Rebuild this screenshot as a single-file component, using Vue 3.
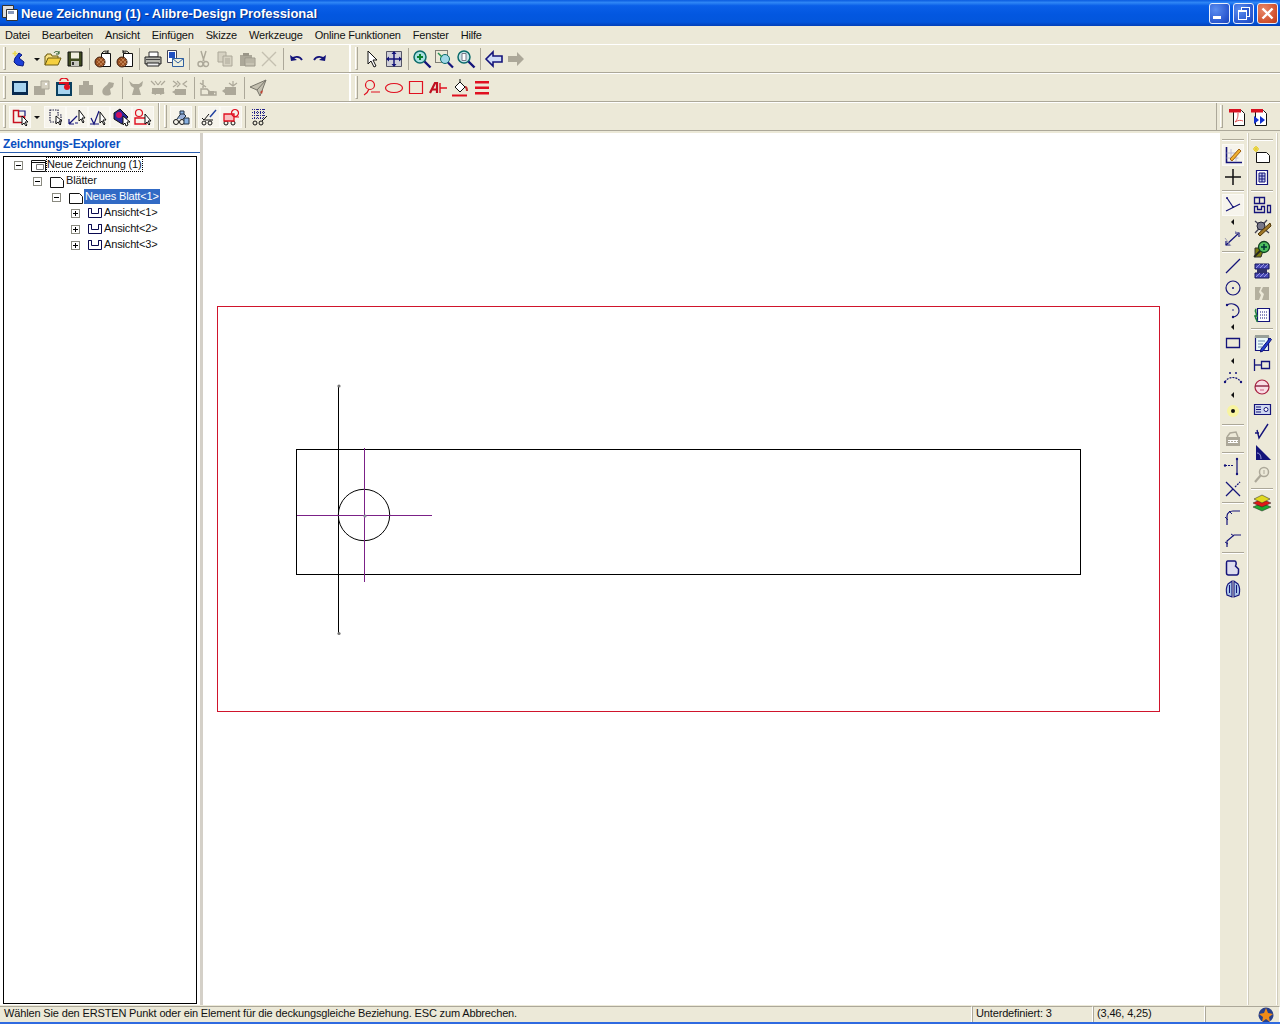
<template>
  <div class="app-window">
    <!-- Titelleiste -->
    <div class="titlebar">
      <Ico name="appdoc" />
      <span class="title-text">Neue Zeichnung (1) - Alibre-Design Professional</span>
      <div class="win-btns">
        <button class="win-btn"><i class="glyph-min"></i></button>
        <button class="win-btn"><i class="glyph-restore"></i></button>
        <button class="win-btn close"><svg width="13" height="13" viewBox="0 0 13 13"><path d="M1.5 1.5l10 10M11.5 1.5l-10 10" stroke="#fff" stroke-width="2.4" /></svg></button>
      </div>
    </div>

    <div class="menubar">
      <span v-for="m in menus" :key="m">{{ m }}</span>
    </div>

    <!-- Werkzeugleisten -->
    <div v-for="(row, r) in toolRows" :key="r" class="tool-row" :class="'row' + r">
      <div v-for="(group, g) in row" :key="g" class="tool-group" :class="group.cls">
        <i class="grip"></i>
        <template v-for="(t, i) in group.items" :key="i">
          <i v-if="t === '|'" class="sep"></i>
          <span v-else-if="t === 'drop'" class="drop"></span>
          <span v-else class="tool" :class="{ pressed: pressed.has(t) }"><Ico :name="t" /></span>
        </template>
      </div>
    </div>
    <div class="row-gap"></div>

    <div class="workspace">
      <!-- Explorer -->
      <aside class="explorer">
        <div class="explorer-head">Zeichnungs-Explorer</div>
        <div class="tree">
          <div v-for="n in tree" :key="n.label" class="tree-row" :style="{ paddingLeft: 10 + n.depth * 19 + 'px' }">
            <span class="expander" :class="{ closed: !n.open }"></span>
            <span class="tree-ico"><Ico :name="n.icon" :vb="16" /></span>
            <span class="tree-label" :class="{ selected: n.selected, focused: n.focused }">{{ n.label }}</span>
          </div>
        </div>
      </aside>
      <div class="splitter"></div>

      <main class="canvas">
        <svg width="1017" height="872" viewBox="203 133 1017 872">
          <rect x="217.5" y="306.5" width="942" height="405" fill="none" stroke="#d0142c" />
          <rect x="296.5" y="449.5" width="784" height="125" fill="none" stroke="#000" />
          <path d="M338.5 386V634" stroke="#000" />
          <circle cx="364" cy="515" r="25.7" fill="none" stroke="#000" />
          <path d="M364.5 448V582M297 515.5H432" stroke="#7b2187" />
          <circle cx="339" cy="386" r="1.6" fill="#777" />
          <circle cx="339" cy="633.5" r="1.6" fill="#777" />
          <circle cx="365" cy="516" r="1.6" fill="#8a8a9a" />
        </svg>
      </main>

      <div class="side-bars">
        <div v-for="(col, c) in sideCols" :key="c" class="side-col">
          <i class="side-grip"></i>
          <template v-for="(t, i) in col" :key="i">
            <i v-if="t === '|'" class="side-sep"></i>
            <span v-else-if="t === '<'" class="side-tri"></span>
            <span v-else-if="t === '<<'" class="side-tri tall"></span>
            <span v-else class="side-tool" :class="{ pressed: pressed.has(t) }"><Ico :name="t" /></span>
          </template>
        </div>
      </div>
    </div>

    <div class="statusbar">
      <div class="status-cell grow">Wählen Sie den ERSTEN Punkt oder ein Element für die deckungsgleiche Beziehung. ESC zum Abbrechen.</div>
      <div class="status-cell c1">Unterdefiniert: 3</div>
      <div class="status-cell c2">(3,46, 4,25)</div>
      <div class="status-cell c3">
        <svg width="16" height="16" viewBox="0 0 16 16"><circle cx="8" cy="8" r="7.5" fill="#27408b" /><path d="M8 1l2 5 5 1-4 3 1 5-4-3-4 3 1-5-4-3 5-1z" fill="#f08a18" /></svg>
      </div>
    </div>
    <div class="bottom-edge"></div>
  </div>
</template>

<script setup>
import { h } from 'vue'

const G = '#aca899'
const N = '#14147a'
const K = '#111'
const R = '#e01020'
const W = '#fff'

const circ = (x, y, r) => `M${x - r} ${y}a${r} ${r} 0 1 0 ${2 * r} 0a${r} ${r} 0 1 0 ${-2 * r} 0z`

// [d, fill, stroke, strokeWidth]
const icons = {
  appdoc: [['M1.5 2.5h11v12h-11z', '#ddd', '#333'], ['M5.5 6.5h11v11h-11z', W, '#333'], ['M7 8h6v3H7z', '#8899bb']],
  app: [['M5 9L9 4l3 2-3 3 5 4-1 4-6-1-3-3z', '#1c3fd8', '#0a1a80'], ['M5 2v5M2.5 4.5h5', 'none', '#e8d850', 1.5]],
  open: [['M2 16V7h1l1-2h4l1 2h6v2', '#f8e080', '#6a5a10'], ['M2 16l3-7h13l-3 7z', '#f5d040', '#6a5a10'], ['M11 4c1-2 4-2 5 0M16 2v3h-3', 'none', '#2a5a2a']],
  save: [['M3 3h14v14H3z', '#3f4a20', K], ['M6 3.5h8v6H6z', '#f0efe0'], ['M6 12h8v5H6z', '#c8c8c0'], ['M7 13h2v3H7z', '#333']],
  ball: [['M8.5 4.5h9v13h-9z', W, K], ['M9 4a4 4 0 0 1 6-1M15 1v3h-3', 'none', K], [circ(7, 13, 5), '#9a5020', '#402010'], ['M4 11l6 6M6 9l6 6M10 9l-6 6M12 11l-6 6', 'none', '#d8a070', 0.6]],
  ball2: [['M8.5 4.5h9v13h-9z', W, K], ['M14 4a4 4 0 0 0-6-1M8 1v3h3', 'none', K], [circ(7, 13, 5), '#9a5020', '#402010'], ['M4 11l6 6M6 9l6 6M10 9l-6 6M12 11l-6 6', 'none', '#d8a070', 0.6]],
  print: [['M6 3h9v5H6z', W, '#333'], ['M2 8h16v7H2z', '#b8b8b0', '#222'], ['M4 14h12v3H4z', '#eee', '#222'], ['M3 10.5h14', 'none', '#444']],
  mail: [['M2.5 1.5h9v12h-9z', W, '#445'], ['M4 3h6v6H4z', '#2050c0'], ['M7.5 9.5h11v8h-11z', '#eef0e0', '#3060a0'], ['M7.5 9.5l5.5 4.5 5.5-4.5', 'none', '#3060a0']],
  cut: [['M8 2l3 10M13 2l-3 10', 'none', G, 1.4], [circ(7.5, 15, 2.5), 'none', G, 1.4], [circ(13, 15, 2.5), 'none', G, 1.4]],
  copy: [['M3 3h8v10H3z', '#d6d2c2', G], ['M8 7h9v10H8z', '#d6d2c2', G], ['M10 10h5M10 12h5M10 14h5', 'none', G]],
  paste: [['M3 6h12v11H3z', G], ['M8 9h10v8H8z', '#c6c2b2', '#9a9688'], ['M6 4h6v3H6z', '#9a9688'], ['M9 11h8M9 13h8', 'none', G]],
  del: [['M3 3l14 14M17 3L3 17', 'none', '#c4c0b0', 1.4]],
  undo: [['M5 10c2-3 8-3 10 1', 'none', N, 1.8], ['M3 6l1 6 6-1z', N]],
  redo: [['M15 10c-2-3-8-3-10 1', 'none', N, 1.8], ['M17 6l-1 6-6-1z', N]],
  arrow: [['M6 2v13l3-3 3 6 2-1-3-6h4z', W, K]],
  pan: [['M2.5 2.5h15v15h-15z', '#cfcfd8', '#556'], ['M10 3v14M3 10h14', 'none', N, 1.5], ['M10 2l-2.5 3h5zM10 18l-2.5-3h5zM2 10l3-2.5v5zM18 10l-3-2.5v5z', N]],
  zoomin: [[circ(8, 8, 6), '#a8e0e0', '#0a6a6a', 1.5], ['M8 5v6M5 8h6', 'none', '#0a8030', 2], ['M12.5 12.5l6 6', 'none', N, 2.4]],
  zoombox: [['M1.5 1.5h12v12h-12z', 'none', K, 1, '1 1'], [circ(11, 10, 4.5), '#a0d8e8', '#0a6a6a'], ['M14 13.5l5 5', 'none', N, 2.2], ['M4 4l4 4', 'none', '#209050', 1.4]],
  zoompage: [[circ(8, 8, 6), '#c8e4e8', '#0a6a6a', 1.5], ['M6 4.5h4v7H6z', W, '#778'], ['M12.5 12.5l6 6', 'none', N, 2.4]],
  back: [['M2 10l7-7v4h9v6H9v4z', '#d0dcf8', N, 1.6]],
  forward: [['M18 10l-7-7v4H2v6h9v4z', G]],
  frame: [['M2 3h16v14H2z', '#082a50'], ['M4 5h12v9H4z', '#a8d4f0']],
  gframes: [['M2 8h11v9H2z', G], ['M9 3h8v8H9z', '#d4d0c0', G], ['M13 5h2v2h-2z', W]],
  tealred: [['M2 4h16v14H2z', '#0a4060'], ['M4 7h12v9H4z', '#a8d4f0'], ['M6 3a4 3 0 0 1 8 0', 'none', R, 1.5], [circ(13, 9, 3), R], ['M5 4h10v2H5z', R]],
  gclip: [['M3 7h14v10H3z', G], ['M7 3h6v4H7z', G]],
  gblob: [['M5 16c-2-4 1-7 4-9l2-3 5 1-1 4-3 2 1 5c-2 2-6 2-8 0z', G]],
  gfig: [['M3 3l4 3h6l4-3-1 5-3 2 2 7H6l2-7-3-2z', G]],
  gwings: [['M3 3l4 4M7 3l3 4M13 3l-3 4M17 3l-4 4', 'none', G, 1.2], ['M4 10h12v6H4z', G], ['M3 15l5-3v5zM17 15l-5-3v5z', G]],
  gwings2: [['M3 3l4 3-4 3M7 3l3 3-3 3M17 3l-4 3 4 3', 'none', G, 1.2], ['M5 11h11v6H5z', G], ['M2 14l5-3v6z', G]],
  gsun: [['M5 2v8M2 5l6 4M3 11h6l3 3h6v3H3z', 'none', G, 1.4], ['M10 13h6v4h-6z', G]],
  gsun2: [['M13 3v5M9 5l4 3 4-3', 'none', G, 1.2], ['M5 9h11v8H5z', G], ['M2 13l4-3v6z', G]],
  plane: [['M2 9L18 2l-6 16-3-6z', '#c4c0b0', '#77756a'], ['M9 12L18 2', 'none', '#77756a'], ['M12 14l3-2-1 4z', '#c04030']],
  rcircle: [[circ(8, 7, 4.5), 'none', R, 1.2], ['M7 11c-1 3-3 5-5 6M9 14h9', 'none', R, 1.2]],
  rellipse: [['M1.5 10a8.5 4.5 0 1 0 17 0a8.5 4.5 0 1 0-17 0z', 'none', R, 1.2]],
  rrect: [['M3.5 3.5h13v12h-13z', 'none', R, 1.2]],
  rtext: [['M2 15L7 5h2v10M4 11.5h5', 'none', '#c01020', 2.2], ['M12 5v10M12 10h7', 'none', R, 1.4]],
  rbucket: [['M5 9l5-5 5 5-5 5z', W, K], ['M10 4V1', 'none', K], ['M15 9c2 0 2 3 2 4', 'none', '#c03030', 2], ['M2 17.5h15', 'none', R, 2]],
  rbars: [['M3 3h14v2.5H3zM3 8.5h14V11H3zM3 14h14v2.5H3z', R]],
  lshape: [['M3.5 3.5h5v6h6v6h-11z', 'none', '#c81020', 1.5], ['M9 4h6v5', 'none', N, 1.2], ['M12 9v9l2-2 2 3 1-1-2-3h3z', W, K]],
  dotted: [['M5 3h8v5h3v7H5z', 'none', '#224', 1.2, '1.5 1'], ['M11 9v8l2-2 2 3 1-1-2-3h3z', W, K]],
  navyar: [['M2 17l8-8M2 17h5M2 17v-5', 'none', N, 1.2], ['M12 3v11l2-2 2 4 1-1-2-4h3z', W, K], ['M8 16h3', 'none', N]],
  check: [['M2 11l3 6 5-13', 'none', N, 1.2], ['M1 17h9', 'none', N], ['M11 5v11l2-2 2 4 1-1-2-4h3z', W, K]],
  tag: [['M3 6l6-4 8 8-6 7-8-5z', '#2a2a9a', '#111'], [circ(8, 8, 3), '#d01060'], ['M12 9v9l2-2 1 3 2-1-1-3h3z', W, K]],
  redcart: [[circ(6, 6, 3.5), 'none', R, 1.2], ['M2 11h11v6H2z', 'none', R, 1.4], ['M12 7v10l2-2 2 3 1-1-2-3h3z', W, K]],
  gearsb: [[circ(5, 15, 2.5), 'none', K], [circ(11, 15, 2.5), 'none', K], ['M6 12l5-7 4 4-3 3', '#98b0d8', '#234'], ['M13 11h5v6h-5z', '#88b0e0', '#234'], ['M9 4h4v3H9z', '#88b0e0', '#234']],
  gearch: [[circ(5, 16, 2), 'none', K], [circ(11, 16, 2), 'none', K], ['M3 11l2 2 5-6', 'none', K], ['M11 10l6-7', 'none', '#2040a0', 1.4], ['M6 13h8', 'none', K]],
  gearr: [[circ(5, 16, 2), 'none', K], [circ(12, 16, 2), 'none', K], ['M3 7h10v7H3z', '#f8c0c0', R, 1.3], [circ(14, 6, 3.5), 'none', R, 1.2], ['M13 10h5', 'none', R]],
  gearh: [['M3 2.5h13M3 5.5h13M3 8.5h13M3 11.5h13M5.5 2v10M8.5 2v10M11.5 2v10M14.5 2v10', 'none', '#23238a', 1, '1 1'], [circ(6, 16, 2), 'none', K], [circ(12, 16, 2), 'none', K], ['M13 14l5-5', 'none', K]],
  pdf: [['M6.5 3.5h8l3 3v12h-11z', W, K], ['M2 2h12v3.5H2z', '#d81020'], ['M8 15c3-3 3-6 3-9M8 15c3-2 6-2 8-1', 'none', '#e05050']],
  pdfnav: [['M6.5 3.5h8l3 3v12h-11z', W, K], ['M2 2h12v3.5H2z', '#d81020'], ['M5 9l5 4-5 4zM11 9l5 4-5 4z', '#1030d0']],
  sketch: [['M3.5 2v15.5H19', 'none', N, 1.6], ['M3.5 8h12M3.5 13h12M8 4v13M13 8v9', 'none', '#b0b0d0', 0.8], ['M7 14L16 4l2 2-9 10z', '#f0b030', '#a06010']],
  plus: [['M10 2v16M2 10h16', 'none', K, 1.5]],
  tang: [['M4 3l6 9', 'none', N, 1.2], ['M3 16l14-7', 'none', N, 1.2], [circ(4, 3, 1), N], [circ(10, 12, 1), N]],
  dim: [['M3 17l13-12', 'none', N, 1.2], ['M3 13v4h4M12 5h4v4', 'none', N, 1.2], ['M2 10l6 8M12 3l6 5', 'none', '#8a8aa8', 0.8]],
  line: [['M3 17L17 3', 'none', N, 1.3]],
  circle: [[circ(10, 10, 7), 'none', N, 1.2], [circ(10, 10, 1), N]],
  arc: [['M4 5c5-3 12 0 12 6 0 3-3 6-6 6', 'none', N, 1.2], [circ(4, 5, 1.2), N], [circ(10, 17, 1.2), N], [circ(10, 10, 0.8), N]],
  rect: [['M3.5 5.5h13v9h-13z', 'none', N, 1.3]],
  curve: [['M2 14c3-6 12-6 16 0', 'none', N, 1.2, '2 1'], [circ(2, 14, 1.2), N], [circ(18, 14, 1.2), N], [circ(7, 5, 1), N], [circ(13, 5, 1), N]],
  point: [[circ(10, 10, 6), '#f8f4a0'], [circ(10, 10, 2), K]],
  fab: [['M3 8h14v9H3z', G], ['M5 11h10v3H5z', W], ['M4 8l3-4 6-1 2 5', 'none', G, 1.5], ['M5 12.5h10', 'none', G, 1, '2 1']],
  trim: [['M2 8.5h9', 'none', N, 1.2, '2 1'], ['M14 2v15', 'none', N, 1.2], [circ(14, 2, 1.2), N], [circ(14, 17, 1.2), N], [circ(2, 8.5, 1.2), N]],
  cross: [['M3 3l14 14', 'none', N, 1.2], ['M3 17l7-7', 'none', N, 1.2], ['M12 8l5-5', 'none', N, 1.2, '2 1']],
  fillet: [['M4 18V9c0-3 3-5 6-5h7', 'none', N, 1.2], ['M2 10l3 3M6 4l3 3', 'none', N, 1]],
  chamfer: [['M4 18v-6l7-6h7', 'none', N, 1.2], ['M2 13l3 2M8 5l3 2', 'none', N, 1]],
  shape: [['M4.5 4h7c2 0 2 3 1 5l3 3v3c0 2-1 3-2 3h-8c-1 0-2-1-2-2V6c0-1 0-2 1-2z', '#dde', N, 1.5]],
  mirror: [['M9 2v16L4 16c-1-4-1-8 1-11z', '#a8c4e8', N, 1.1], ['M11 2v16l5-2c1-4 1-8-1-11z', '#a8c4e8', N, 1.1], ['M6.5 6v8M13.5 6v8', 'none', N]],
  newsheet: [['M4.5 7.5h10l3 3v7h-13z', W, K], ['M4 1v6M1 4h6', 'none', '#e8d030', 1.6], ['M2 2l4 4M6 2L2 6', 'none', '#e8d030']],
  sheetprop: [['M4.5 3.5h11v14h-11z', W, N, 1.2], ['M7 6h6v9H7z', '#c0c8f0', N], ['M7 9h6M7 12h6M10 6v9', 'none', N]],
  views: [['M2.5 2.5h10v6h-10zM7.5 2.5v6', 'none', N, 1.3], ['M2.5 11.5v6h10v-6h-3v3h-4v-3z', 'none', N, 1.3], ['M15.5 10.5h3v7h-3z', 'none', N, 1.3]],
  hatchtool: [['M3 4l14 12M15 3L3 16', 'none', '#445', 1.3], [circ(9, 9, 4), '#778', '#223'], ['M6 17L18 6l1 3-11 10z', '#a07828', '#503808']],
  zoomgr: [['M3 9h9l-3 9H3z', '#7a7a10', '#333'], [circ(12, 8, 5.5), '#50c060', '#104020', 1.3], ['M12 5v6M9 8h6', 'none', '#033', 1.5], ['M2 18l6-6', 'none', '#222', 1.8]],
  hatch: [['M3 3h14v5H3zM3 12h14v5H3z', '#4a4ab8', '#14145a'], ['M5 8h10v4H5z', '#30306a'], ['M4 7l4-4M8 7l4-4M12 7l4-4M4 16l4-4M8 16l4-4M12 16l4-4', 'none', '#9a9ae0']],
  gsplit: [['M3 4h6l-2 5 2 3-2 5H3zM17 4h-6l-2 4 3 3-2 6h7z', '#b4b09e']],
  table: [['M5.5 3.5h12v13h-12z', W, N, 1.2], ['M8 7h7M8 10h7M8 13h7', 'none', N, 1, '1 1'], ['M4 4c-2 3 2 5 0 7s2 4 1 6', 'none', '#208040', 1.6], ['M2 11h4', 'none', '#208040', 1.4]],
  note: [['M3.5 3.5h13v14h-13z', '#e8f8f8', N, 1.2], ['M3 2h14v3H3z', '#98a098'], ['M6 8h7M6 11h5M6 14h4', 'none', '#6a8ab0'], ['M9 16L18 5l1.5 1.5L11 18l-2.5 1z', '#2040d0', N]],
  dimbox: [['M2.5 4v12', 'none', N, 1.3], ['M3 10h6', 'none', N, 1.3], ['M9.5 6.5h8v7h-8z', 'none', N, 1.3]],
  section: [[circ(10, 10, 7), '#f8dce4', '#a82040', 1.2], ['M3 9h14', 'none', '#801030', 1.3], ['M8 13h4', 'none', '#d06080']],
  balloon: [['M2.5 5.5h16v10h-16z', '#d0d8f0', N, 1.2], ['M4 8h5M4 10.5h5M4 13h5', 'none', N], [circ(14, 10.5, 2), W, N]],
  checkt: [['M3 12h4M5 9l2 8 9-14', 'none', N, 1.4]],
  angle: [['M4 2v15h15z', N], ['M5 10c3 0 4 3 4 6', 'none', '#a0a0e0']],
  gmag: [[circ(12, 7, 4.5), 'none', G, 1.5], ['M9 10l-6 7', 'none', G, 2.2], ['M12 5v4', 'none', G]],
  layers: [['M1 14l9-4 9 4-9 4z', '#20a830', '#222', 0.5], ['M1 10l9-4 9 4-9 4z', '#e01818', '#222', 0.5], ['M2 6l8-4 8 4-8 4z', '#e0d820', '#222', 0.5]],
  treeroot: [['M1.5 3.5h14v11h-14z', 'none', K], ['M1.5 5.5h14', 'none', K], ['M6.5 7.5h7v5h-7z', 'none', '#777']],
  treesheet: [['M1.5 4.5h10l3 3v7h-13z', W, K]],
  treeview: [['M1.5 3.5v9h13v-9h-3v5h-7v-5z', W, '#0a0a50'], ['M1.5 3.5h3M11.5 3.5h3', 'none', '#0a0a50']]
}

// Kleines Hilfs-Icon: alle Pfade aus der Tabelle oben
const Ico = (props) =>
  h('svg', { width: props.vb || 20, height: props.vb || 20, viewBox: `0 0 ${props.vb || 20} ${props.vb || 20}` },
    (icons[props.name] || []).map((p) =>
      h('path', { d: p[0], fill: p[1] || 'none', stroke: p[2] || 'none', 'stroke-width': p[3] || 1, 'stroke-dasharray': p[4] || null })
    ))

const menus = ['Datei', 'Bearbeiten', 'Ansicht', 'Einfügen', 'Skizze', 'Werkzeuge', 'Online Funktionen', 'Fenster', 'Hilfe']

const pressed = new Set(['lshape', 'dotted', 'navyar', 'check', 'tag', 'redcart', 'gearsb', 'gearch', 'gearr', 'sketch', 'tang'])

const toolRows = [
  [
    { cls: 'left', items: ['app', 'drop', 'open', 'save', '|', 'ball', 'ball2', '|', 'print', 'mail', '|', 'cut', 'copy', 'paste', 'del', '|', 'undo', 'redo'] },
    { cls: 'rest', items: ['arrow', 'pan', '|', 'zoomin', 'zoombox', 'zoompage', '|', 'back', 'forward'] }
  ],
  [
    { cls: 'left', items: ['frame', 'gframes', 'tealred', 'gclip', 'gblob', '|', 'gfig', 'gwings', 'gwings2', '|', 'gsun', 'gsun2', '|', 'plane'] },
    { cls: 'rest', items: ['rcircle', 'rellipse', 'rrect', 'rtext', 'rbucket', 'rbars'] }
  ],
  [
    { cls: 'short', items: ['lshape', 'drop', 'dotted', 'navyar', 'check', 'tag', 'redcart'] },
    { cls: 'mid', items: ['gearsb', '|', 'gearch', 'gearr', '|', 'gearh'] },
    { cls: 'end', items: ['pdf', 'pdfnav'] }
  ]
]

const sideCols = [
  ['sketch', 'plus', '|', 'tang', '<', 'dim', '|', 'line', 'circle', 'arc', '<', 'rect', '<<', 'curve', '<', 'point', '|', 'fab', '|', 'trim', 'cross', '|', 'fillet', 'chamfer', '|', 'shape', 'mirror'],
  ['newsheet', 'sheetprop', '|', 'views', 'hatchtool', 'zoomgr', 'hatch', 'gsplit', 'table', '|', 'note', 'dimbox', 'section', 'balloon', 'checkt', 'angle', 'gmag', '|', 'layers']
]

const tree = [
  { label: 'Neue Zeichnung (1)', depth: 0, open: true, icon: 'treeroot', focused: true },
  { label: 'Blätter', depth: 1, open: true, icon: 'treesheet' },
  { label: 'Neues Blatt<1>', depth: 2, open: true, icon: 'treesheet', selected: true },
  { label: 'Ansicht<1>', depth: 3, icon: 'treeview' },
  { label: 'Ansicht<2>', depth: 3, icon: 'treeview' },
  { label: 'Ansicht<3>', depth: 3, icon: 'treeview' }
]
</script>

<style>
html, body { margin: 0; overflow: hidden; }
</style>

<style scoped>
.app-window {
  width: 1280px;
  height: 1024px;
  display: flex;
  flex-direction: column;
  background: #ece9d8;
  font: 11px "Liberation Sans", Arial, sans-serif;
  letter-spacing: -0.15px;
  color: #111;
  overflow: hidden;
}
.titlebar {
  height: 26px;
  flex: none;
  display: flex;
  align-items: center;
  padding: 0 2px 0 1px;
  background: linear-gradient(180deg, #0a5be0 0%, #2f86f5 10%, #0a5fe8 22%, #0357e0 55%, #0356dc 85%, #0340b8 100%);
}
.title-text {
  color: #fff;
  font: bold 13px "Liberation Sans", Arial, sans-serif;
  letter-spacing: -0.04px;
  text-shadow: 1px 1px 1px #0a2a80;
  white-space: nowrap;
}
.win-btns { margin-left: auto; display: flex; gap: 3px; }
.win-btn {
  width: 21px;
  height: 21px;
  padding: 0;
  border: 1px solid #e8effc;
  border-radius: 3px;
  background: radial-gradient(circle at 30% 30%, #5c8ef0, #2a58d0 70%, #1c45b8);
  display: flex;
  align-items: center;
  justify-content: center;
}
.win-btn.close { background: radial-gradient(circle at 30% 30%, #e8886a, #d0502c 70%, #b83a1c); }
.glyph-min { width: 8px; height: 3px; background: #fff; margin: 8px 6px 0 0; }
.glyph-restore { width: 7px; height: 7px; border: 1px solid #fff; border-top-width: 2px; margin: 3px 3px 0 0; box-shadow: 3px -3px 0 -1px #2a58d0, 3px -3px 0 0 #fff; }

.menubar {
  height: 18px;
  flex: none;
  display: flex;
  align-items: center;
  gap: 12px;
  padding-left: 5px;
  letter-spacing: -0.19px;
}

.tool-row {
  height: 29px;
  flex: none;
  box-sizing: border-box;
  display: flex;
  border-top: 1px solid #fff;
  border-bottom: 1px solid #aca899;
}
.tool-group {
  height: 100%;
  display: flex;
  align-items: center;
  padding-left: 3px;
}
.tool-group.left { width: 351px; box-sizing: border-box; border-right: 2px solid #fff; }
.tool-group.rest { padding-left: 4px; }
.tool-group.short { width: 159px; box-sizing: border-box; border-right: 1px solid #aca899; box-shadow: 1px 0 0 #fff; }
.tool-group.mid { flex: 1; padding-left: 5px; border-right: 1px solid #aca899; }
.tool-group.end { width: 63px; box-sizing: border-box; }
.grip {
  width: 1px;
  height: 22px;
  margin-right: 3px;
  border-left: 1px solid #fff;
  border-right: 1px solid #aca899;
  border-bottom: 1px solid #aca899;
}
.tool { width: 22px; height: 22px; flex: none; display: flex; align-items: center; justify-content: center; box-sizing: border-box; }
.tool.pressed, .side-tool.pressed { background: #f6f4ec; outline: 1px solid #fbfaf5; outline-offset: -1px; }
.sep { width: 1px; height: 22px; margin: 0 2px 0 3px; background: #aca899; flex: none; }
.drop {
  width: 11px;
  height: 22px;
  flex: none;
  position: relative;
}
.short .drop { width: 13px; }
.drop::after {
  content: "";
  position: absolute;
  left: 3px;
  top: 10px;
  border: 3px solid transparent;
  border-top: 3px solid #111;
  border-bottom: none;
}
.row-gap { height: 2px; flex: none; }

.workspace { flex: 1; min-height: 0; display: flex; }
.explorer {
  width: 200px;
  flex: none;
  display: flex;
  flex-direction: column;
  background: #fff;
}
.explorer-head {
  height: 20px;
  flex: none;
  box-sizing: border-box;
  padding: 4px 0 0 3px;
  color: #0a4fc0;
  font-weight: bold;
  font-size: 12px;
  line-height: 14px;
  border-bottom: 1px solid #2a5fb0;
  white-space: nowrap;
}
.tree {
  flex: 1;
  margin: 3px 3px 1px 3px;
  border: 1px solid #000;
}
.tree-row { height: 16px; display: flex; align-items: center; }
.tree-row:first-child { margin-top: -1px; }
.expander {
  width: 9px;
  height: 9px;
  flex: none;
  box-sizing: border-box;
  border: 1px solid #8a8a80;
  background: #fff;
  margin-top: 2px;
  position: relative;
}
.expander::before {
  content: "";
  position: absolute;
  left: 1px;
  top: 3px;
  width: 5px;
  height: 1px;
  background: #000;
}
.expander.closed::after {
  content: "";
  position: absolute;
  left: 3px;
  top: 1px;
  width: 1px;
  height: 5px;
  background: #000;
}
.tree-ico { margin-left: 7px; width: 16px; height: 16px; flex: none; display: flex; margin-top: 2px; }
.tree-label { padding: 0 1px; height: 15px; line-height: 14px; box-sizing: border-box; white-space: nowrap; }
.tree-label.selected { background: #316ac5; color: #fff; }
.tree-label.focused { outline: 1px dotted #000; outline-offset: -1px; }
.splitter { width: 3px; flex: none; background: #d4d0c8; }
.canvas { width: 1017px; flex: none; background: #fff; overflow: hidden; }
.canvas svg { display: block; }

.side-bars { flex: 1; display: flex; }
.side-col {
  width: 26px;
  flex: none;
  display: flex;
  flex-direction: column;
  align-items: center;
  border-right: 1px solid #fff;
  box-shadow: 1px 0 0 #d0ccbc;
  padding: 6px 1px 0 0;
}
.side-col + .side-col { margin-left: 1px; }
.side-grip { width: 22px; height: 1px; margin-bottom: 4px; flex: none; background: #aca899; box-shadow: 0 1px 0 #fff; }
.side-tool { width: 22px; height: 22px; flex: none; display: flex; align-items: center; justify-content: center; }
.side-sep { width: 22px; height: 1px; margin: 2px 0 3px; flex: none; background: #aca899; box-shadow: 0 1px 0 #fff; }
.side-tri { height: 11px; width: 22px; flex: none; position: relative; }
.side-tri.tall { height: 13px; }
.side-tri::after {
  content: "";
  position: absolute;
  left: 9px;
  top: 3px;
  border: 3px solid transparent;
  border-right: 3px solid #111;
  border-left: none;
}
.side-tri.tall::after { top: 4px; }

.statusbar { height: 16px; flex: none; display: flex; line-height: 12px; padding-top: 1px; }
.status-cell { box-sizing: border-box; height: 16px; padding: 0 3px; border-left: 1px solid #aca899; border-top: 1px solid #aca899; border-right: 1px solid #fff; white-space: nowrap; }
.status-cell.grow { width: 972px; border-left: none; padding-left: 4px; }
.status-cell.c1 { width: 121px; }
.status-cell.c2 { width: 112px; }
.status-cell.c3 { flex: 1; display: flex; justify-content: flex-end; padding: 0 5px 0 0; }
.bottom-edge { height: 2px; flex: none; background: #2f6ae0; }
</style>
